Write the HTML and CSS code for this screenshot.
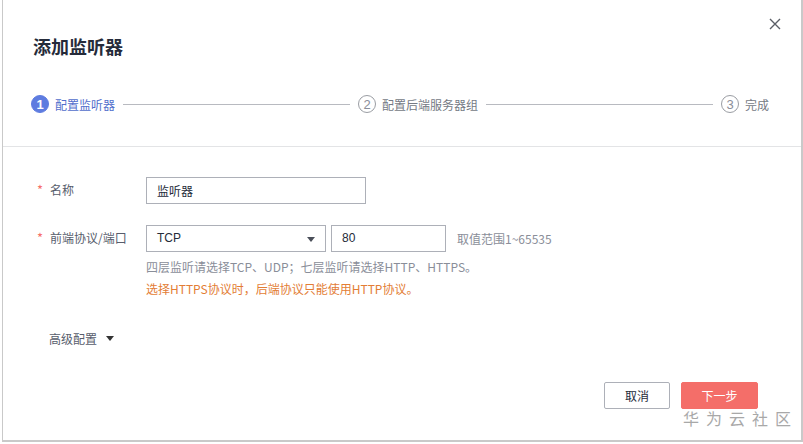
FILE: index.html
```html
<!DOCTYPE html>
<html lang="zh">
<head>
<meta charset="utf-8">
<link rel="stylesheet" href="styles.css">
</head>
<body>
<div class="dialog">
  <div class="header">
    <h1 class="title">添加监听器</h1>
    <button class="close" aria-label="关闭">
      <svg width="12" height="12" viewBox="0 0 12 12"><path d="M1 1L11 11M11 1L1 11" stroke="#5a5e66" stroke-width="1.4" fill="none"/></svg>
    </button>
  </div>
  <div class="steps">
    <div class="step active"><span class="num">1</span><span class="label">配置监听器</span></div>
    <div class="line"></div>
    <div class="step"><span class="num">2</span><span class="label">配置后端服务器组</span></div>
    <div class="line"></div>
    <div class="step"><span class="num">3</span><span class="label">完成</span></div>
  </div>
  <div class="divider"></div>
  <div class="form">
    <div class="row">
      <div class="lbl"><span class="req">*</span>名称</div>
      <div class="ctrl">
        <div class="input name">监听器</div>
      </div>
    </div>
    <div class="row row2">
      <div class="lbl"><span class="req">*</span>前端协议/端口</div>
      <div class="ctrl">
        <div class="inline">
          <div class="input select">TCP<span class="caret"></span></div>
          <div class="input port">80</div>
          <span class="range">取值范围1~65535</span>
        </div>
        <p class="hint">四层监听请选择TCP、UDP；七层监听请选择HTTP、HTTPS。</p>
        <p class="hint warn">选择HTTPS协议时，后端协议只能使用HTTP协议。</p>
      </div>
    </div>
    <div class="advanced">高级配置<span class="caret dark"></span></div>
  </div>
  <div class="footer">
    <button class="btn">取消</button>
    <button class="btn primary">下一步</button>
  </div>
  <div class="watermark">华为云社区</div>
</div>
</body>
</html>
```
FILE: styles.css
```css
* { box-sizing: border-box; }
html, body { margin: 0; padding: 0; background: #fff; }
body {
  font-family: "Noto Sans CJK SC", "Noto Sans", sans-serif;
  font-size: 12px;
  color: #575d6c;
}
.dialog {
  position: relative;
  width: 801px;
  height: 442px;
  margin-left: 2px;
  border-left: 1px solid #c9c9c9;
  border-right: 2px solid #c9c9c9;
  border-bottom: 2px solid #c9c9c9;
  background: #fff;
}
.header {
  display: flex;
  justify-content: space-between;
  align-items: flex-start;
  padding: 0 20px 0 30px;
}
.title {
  margin: 34px 0 0;
  font-size: 18px;
  line-height: 24px;
  font-weight: 700;
  color: #252b3a;
}
.close {
  margin-top: 18px;
  border: 0;
  background: none;
  padding: 0;
  width: 12px;
  height: 12px;
  display: flex;
}
.steps {
  display: flex;
  align-items: center;
  padding: 0 32px 0 28px;
  margin-top: 36px;
  height: 20px;
}
.step { display: flex; align-items: center; }
.num {
  width: 18px; height: 18px;
  border-radius: 50%;
  border: 1px solid #9a9da3;
  color: #8a8e99;
  font-family: "Liberation Sans", sans-serif;
  font-size: 13px;
  display: flex; align-items: center; justify-content: center;
  margin-right: 6px;
}
.step.active .num { background: #5e7ce0; border-color: #5e7ce0; color: #fff; font-weight: 700; }
.label { color: #757a84; font-size: 12px; }
.step.active .label { color: #526ecc; }
.line { flex: 1; height: 1px; background: #b8bac0; margin: 0 8px; }
.divider { height: 1px; background: #e3e4e6; margin-top: 32px; }
.form { padding: 30px 0 0 34px; }
.row { display: flex; align-items: flex-start; }
.row2 { margin-top: 21px; }
.lbl { width: 109px; line-height: 26px; color: #575d6c; }
.req { color: #f66f6a; margin-right: 7px; font-size: 13px; }
.ctrl { display: flex; flex-direction: column; }
.input {
  height: 27px;
  border: 1px solid #adb0b8;
  padding: 0 10px;
  line-height: 25px;
  color: #252b3a;
  font-size: 12px;
}
.name { width: 220px; }
.inline { display: flex; align-items: center; }
.select {
  width: 180px;
  position: relative;
  font-family: "Liberation Sans", sans-serif;
}
.port { width: 115px; margin-left: 5px; font-family: "Liberation Sans", sans-serif; }
.caret {
  display: inline-block;
  width: 0; height: 0;
  border-left: 4px solid transparent;
  border-right: 4px solid transparent;
  border-top: 5px solid #4a4f59;
}
.select .caret { position: absolute; right: 10px; top: 11px; }
.range { margin-left: 11px; color: #8a8e99; }
.hint { margin: 0; line-height: 22px; color: #8a8e99; }
.inline + .hint { margin-top: 4px; }
.warn { color: #e37d35; }
.advanced {
  margin: 30px 0 0 12px;
  color: #575d6c;
  display: flex;
  align-items: center;
}
.advanced .caret { margin-left: 9px; border-top-color: #333; }
.footer {
  display: flex;
  justify-content: flex-end;
  gap: 11px;
  padding-right: 43px;
  margin-top: 35px;
}
.btn {
  font-family: "Noto Sans CJK SC", sans-serif;
  font-size: 12px;
  height: 27px;
  width: 66px;
  border: 1px solid #adb0b8;
  background: #fff;
  color: #252b3a;
  border-radius: 2px;
  padding: 0;
}
.btn.primary {
  width: 77px;
  background: #f46e69;
  border-color: #f46e69;
  color: #fff;
}
.watermark {
  position: absolute;
  left: 680px;
  top: 406px;
  font-size: 16px;
  letter-spacing: 7px;
  color: #9a9a9a;
  opacity: 0.85;
}
```
